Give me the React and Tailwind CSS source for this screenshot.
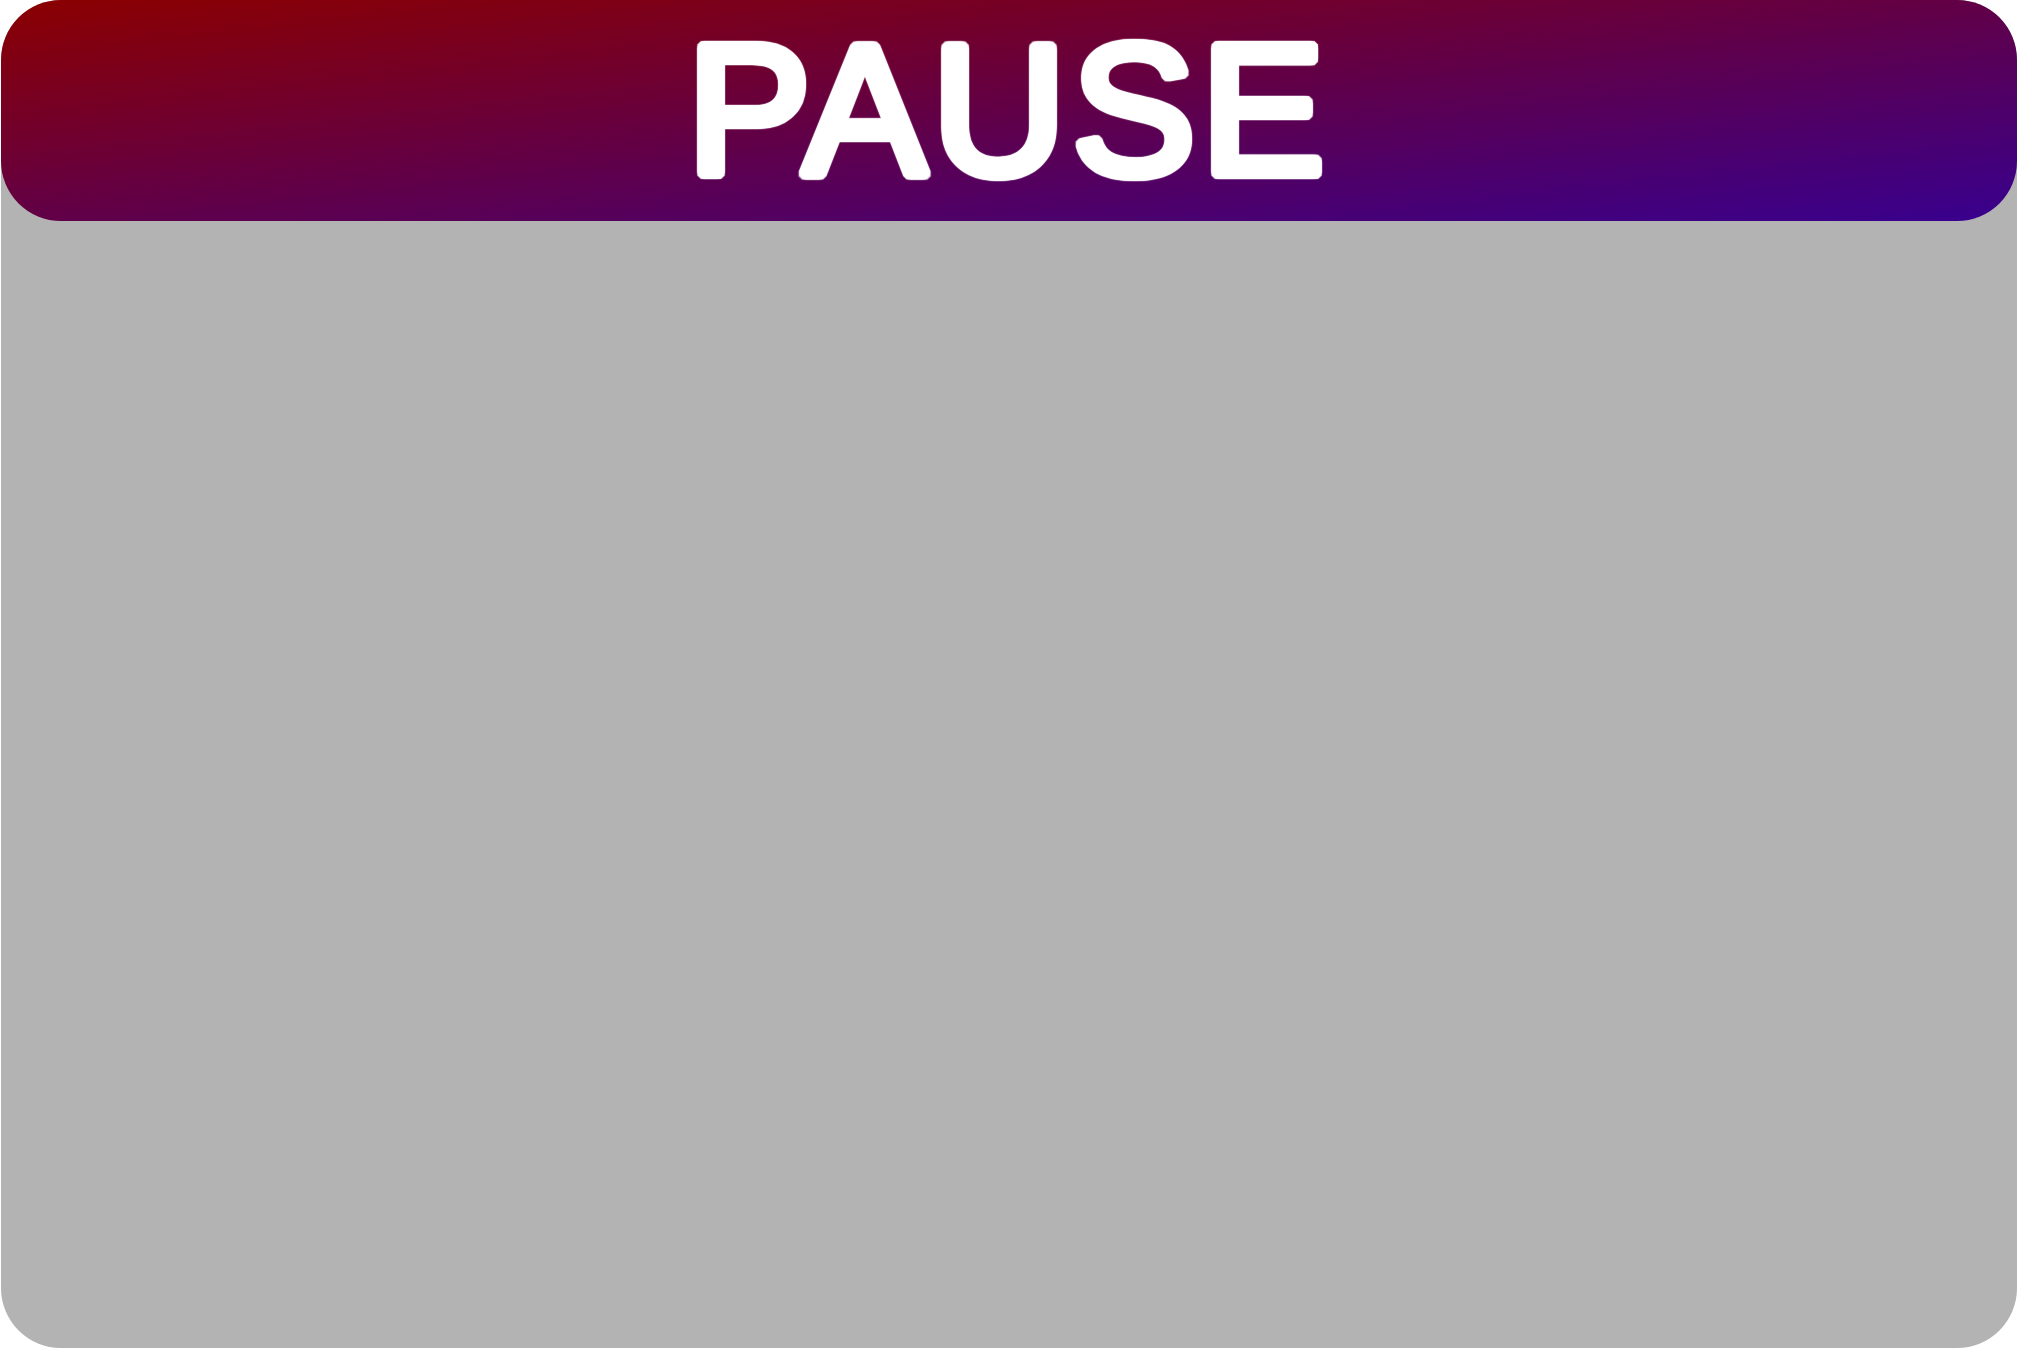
import React from 'react';

const App = () => {
  return (
    <div className="w-[2018px] h-[1349px] bg-white pl-px">
      <div className="w-[2016px] h-[1348px] bg-[#b3b3b3] rounded-[60px] flex flex-col">
        <div className="h-[221px] rounded-[60px] bg-[linear-gradient(to_bottom_right,#8b0000,#38008e)] flex items-center justify-center">
          {/* regular weight + round white outline (shadow ring) gives the soft bold look */}
          <h1
            className="text-white text-[185px] leading-none font-normal tracking-[6px] [text-shadow:5px_0_1px_#fff,5px_2px_1px_#fff,4px_3px_1px_#fff,3px_4px_1px_#fff,2px_5px_1px_#fff,0_5px_1px_#fff,-2px_5px_1px_#fff,-3px_4px_1px_#fff,-4px_3px_1px_#fff,-5px_2px_1px_#fff,-5px_0_1px_#fff,-5px_-2px_1px_#fff,-4px_-3px_1px_#fff,-3px_-4px_1px_#fff,-2px_-5px_1px_#fff,0_-5px_1px_#fff,2px_-5px_1px_#fff,3px_-4px_1px_#fff,4px_-3px_1px_#fff,5px_-2px_1px_#fff,3px_0_0_#fff,-3px_0_0_#fff,0_3px_0_#fff,0_-3px_0_#fff]"
            style={{ fontFamily: '"Liberation Sans", Arial, sans-serif' }}
          >
            PAUSE
          </h1>
        </div>
      </div>
    </div>
  );
};

export default App;
